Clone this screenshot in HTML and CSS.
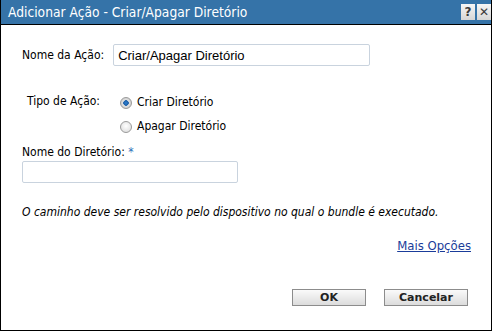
FILE: index.html
```html
<!DOCTYPE html>
<html>
<head>
    <meta charset="utf-8" />
    <title>Adicionar Ação - Criar/Apagar Diretório</title>
    <link rel="stylesheet" href="styles.css">
</head>
<body>
    <div class="dialog">
        <div class="titlebar">
            <span class="title">Adicionar Ação - Criar/Apagar Diretório</span>
            <span class="tbtns">
                <span class="tbtn">?</span>
                <span class="tbtn">&#x2715;</span>
            </span>
        </div>
        <div class="content">
            <div class="row-nome">
                <label class="lbl">Nome da Ação:</label>
                <input type="text" class="tb tb-nome" value="Criar/Apagar Diretório" />
            </div>
            <div class="row-tipo">
                <span class="lbl lbl-tipo">Tipo de Ação:</span>
                <div class="radios">
                    <label class="radio"><input type="radio" name="tipo" checked /> Criar Diretório</label>
                    <label class="radio"><input type="radio" name="tipo" /> Apagar Diretório</label>
                </div>
            </div>
            <div class="lbl lbl-dir">Nome do Diretório: <span class="req">*</span></div>
            <input type="text" class="tb tb-dir" />
            <p class="nota">O caminho deve ser resolvido pelo dispositivo no qual o bundle é executado.</p>
            <div class="mais"><a href="#">Mais Opções</a></div>
            <div class="botoes">
                <button class="btn btn-ok">OK</button>
                <button class="btn">Cancelar</button>
            </div>
        </div>
    </div>
</body>
</html>
```

FILE: styles.css
```css
body {
    margin: 0;
    background-color: #ffffff;
}

.dialog {
    width: 490px;
    height: 330px;
    border: 1px solid #000000;
    border-top: none;
    font-family: "DejaVu Sans Condensed", "DejaVu Sans", sans-serif;
    font-size: 12px;
    line-height: 15px;
    color: #000000;
}

.titlebar {
    height: 24px;
    background-color: #3573a8;
    border-bottom: 1px solid #000000;
    display: flex;
    align-items: center;
    justify-content: space-between;
}

.title {
    color: #ffffff;
    font-size: 13.7px;
    padding-left: 7px;
    padding-top: 1px;
}

.tbtns {
    display: flex;
    gap: 2px;
}

.tbtn {
    width: 14px;
    height: 16px;
    background: linear-gradient(#f6f6f6, #d6d6d6);
    color: #3a3a3a;
    font-family: "DejaVu Sans", sans-serif;
    font-weight: bold;
    font-size: 12px;
    line-height: 16px;
    text-align: center;
}

.content {
    padding: 19px 20px 0 21px;
}

.row-nome {
    display: flex;
    align-items: center;
    gap: 9px;
}

.tb {
    display: block;
    height: 22px;
    box-sizing: border-box;
    border: 1px solid #c9d3de;
    border-radius: 2px;
    font-family: "Liberation Sans", Arial, sans-serif;
    font-size: 13px;
    padding: 0 4px;
    margin: 0;
}

.tb-nome {
    width: 257px;
}

.row-tipo {
    display: flex;
    margin-top: 28px;
    padding-left: 5px;
}

.lbl-tipo {
    width: 93px;
}

.radios {
    display: flex;
    flex-direction: column;
    gap: 9px;
    margin-top: 1px;
}

.radio {
    display: flex;
    align-items: center;
}

.radio input {
    appearance: none;
    width: 12px;
    height: 12px;
    margin: 0 5px 0 0;
    border: 1px solid #9a9a9a;
    border-radius: 50%;
    background: radial-gradient(circle at 50% 40%, #ffffff, #d8d8d8);
    box-sizing: border-box;
}

.radio input:checked {
    background: radial-gradient(circle, #2f7fd0 0, #1c5fa8 2.5px, #e2e2e2 3px, #c8c8c8 6px);
}

.lbl-dir {
    margin-top: 11px;
}

.req {
    color: #2a6fb8;
}

.tb-dir {
    width: 216px;
    margin-top: 1px;
}

.nota {
    font-style: italic;
    margin: 22px 0 0 0;
}

.mais {
    text-align: right;
    margin-top: 18px;
    padding-right: 0px;
    font-size: 13px;
}

.mais a {
    color: #1a3c9a;
}

.botoes {
    display: flex;
    justify-content: flex-end;
    gap: 18px;
    margin-top: 36px;
    padding-right: 3px;
}

.btn {
    width: 84px;
    height: 17px;
    background: linear-gradient(#fafafa, #dcdcdc);
    border: 1px solid #8c8c8c;
    font-family: "DejaVu Sans", sans-serif;
    font-size: 11px;
    font-weight: bold;
    color: #222222;
    padding: 0;
}

.btn-ok {
    width: 74px;
}
```
